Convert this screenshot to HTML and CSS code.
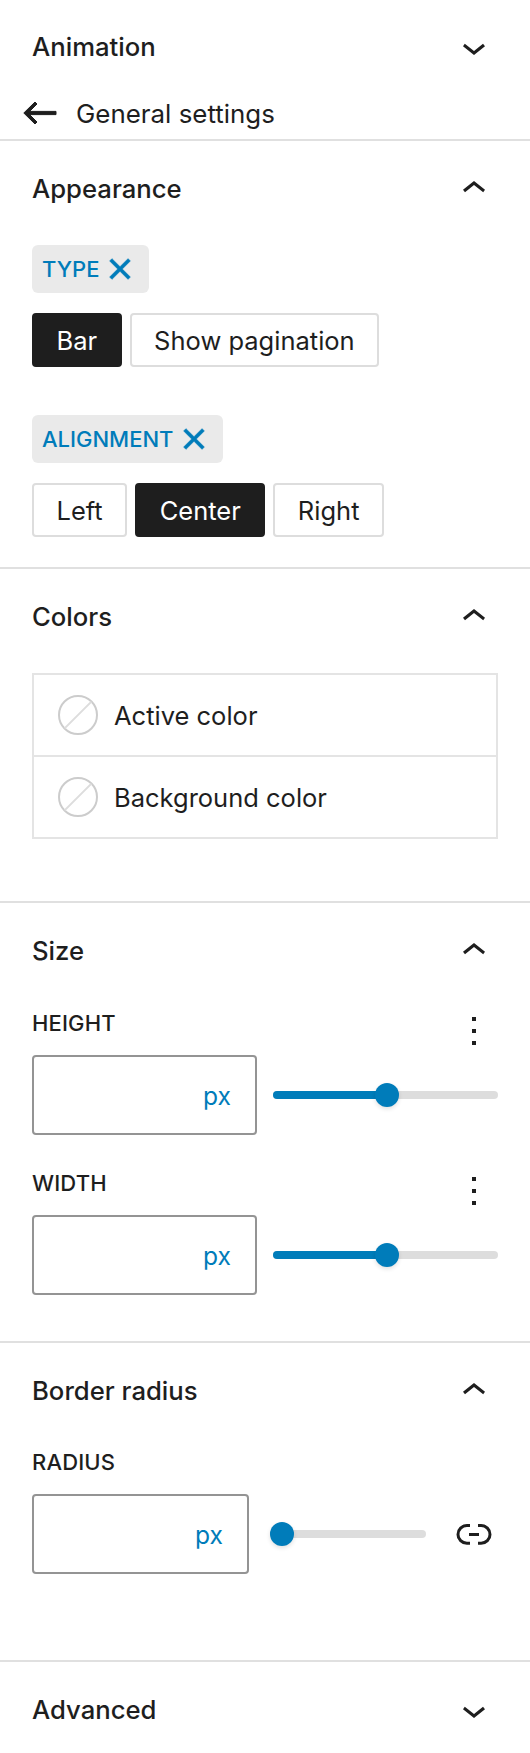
FILE: index.html
```html
<!DOCTYPE html>
<html lang="en">
<head>
<meta charset="utf-8">
<title>Settings</title>
<link rel="stylesheet" href="styles.css">
</head>
<body>
<aside class="sidebar">
  <section class="panel panel--first">
    <header class="head"><h2>Animation</h2>
      <svg class="icon" viewBox="0 0 24 24"><path d="M17.5 11.6L12 16l-5.5-4.4.9-1.2L12 14l4.5-3.6 1 1.2z"/></svg>
    </header>
    <div class="back">
      <svg class="icon icon--back" viewBox="0 0 24 24"><path d="M20 11.2H6.8l3.7-3.7-1-1L3.9 12l5.6 5.5 1-1-3.7-3.7H20z"/></svg>
      <span>General settings</span>
    </div>
  </section>

  <section class="panel panel--appearance">
    <header class="head"><h2>Appearance</h2>
      <svg class="icon" viewBox="0 0 24 24"><path d="M6.5 12.4L12 8l5.5 4.4-.9 1.2L12 10l-4.5 3.6-1-1.2z"/></svg>
    </header>
    <div class="chip"><span>TYPE</span>
      <svg class="chip-x" viewBox="6 6 12 12"><path d="M12 13.06l3.712 3.713 1.061-1.06L13.061 12l3.712-3.712-1.06-1.06L12 10.938 8.288 7.227l-1.061 1.06L10.939 12l-3.712 3.712 1.06 1.061L12 13.061z"/></svg>
    </div>
    <div class="btns">
      <button class="btn btn--on">Bar</button>
      <button class="btn">Show pagination</button>
    </div>
    <div class="chip chip--second"><span>ALIGNMENT</span>
      <svg class="chip-x" viewBox="6 6 12 12"><path d="M12 13.06l3.712 3.713 1.061-1.06L13.061 12l3.712-3.712-1.06-1.06L12 10.938 8.288 7.227l-1.061 1.06L10.939 12l-3.712 3.712 1.06 1.061L12 13.061z"/></svg>
    </div>
    <div class="btns">
      <button class="btn">Left</button>
      <button class="btn btn--on">Center</button>
      <button class="btn">Right</button>
    </div>
  </section>

  <section class="panel panel--colors">
    <header class="head"><h2>Colors</h2>
      <svg class="icon" viewBox="0 0 24 24"><path d="M6.5 12.4L12 8l5.5 4.4-.9 1.2L12 10l-4.5 3.6-1-1.2z"/></svg>
    </header>
    <div class="colors">
      <div class="color">
        <svg class="swatch" viewBox="0 0 40 40"><circle cx="20" cy="20" r="19" class="swatch-ring"/><line x1="6.6" y1="33.4" x2="33.4" y2="6.6" class="swatch-line"/></svg>
        <span>Active color</span>
      </div>
      <div class="color">
        <svg class="swatch" viewBox="0 0 40 40"><circle cx="20" cy="20" r="19" class="swatch-ring"/><line x1="6.6" y1="33.4" x2="33.4" y2="6.6" class="swatch-line"/></svg>
        <span>Background color</span>
      </div>
    </div>
  </section>

  <section class="panel panel--size">
    <header class="head"><h2>Size</h2>
      <svg class="icon" viewBox="0 0 24 24"><path d="M6.5 12.4L12 8l5.5 4.4-.9 1.2L12 10l-4.5 3.6-1-1.2z"/></svg>
    </header>
    <div class="label-row"><span class="label">HEIGHT</span>
      <svg class="icon icon--more" viewBox="0 0 24 24"><path d="M13 19h-2v-2h2v2zm0-6h-2v-2h2v2zm0-6h-2V5h2v2z"/></svg>
    </div>
    <div class="control">
      <div class="unit"><span>px</span></div>
      <div class="slider"><div class="fill"><div class="thumb"></div></div></div>
    </div>
    <div class="label-row label-row--next"><span class="label">WIDTH</span>
      <svg class="icon icon--more" viewBox="0 0 24 24"><path d="M13 19h-2v-2h2v2zm0-6h-2v-2h2v2zm0-6h-2V5h2v2z"/></svg>
    </div>
    <div class="control">
      <div class="unit"><span>px</span></div>
      <div class="slider"><div class="fill"><div class="thumb"></div></div></div>
    </div>
  </section>

  <section class="panel panel--radius">
    <header class="head"><h2>Border radius</h2>
      <svg class="icon" viewBox="0 0 24 24"><path d="M6.5 12.4L12 8l5.5 4.4-.9 1.2L12 10l-4.5 3.6-1-1.2z"/></svg>
    </header>
    <div class="label-row label-row--plain"><span class="label">RADIUS</span></div>
    <div class="control control--radius">
      <div class="unit"><span>px</span></div>
      <div class="slider slider--grow"><div class="thumb thumb--start"></div></div>
      <svg class="icon" viewBox="0 0 24 24"><path d="M10 17.389H8.444A5.194 5.194 0 1 1 8.444 7H10v1.5H8.444a3.694 3.694 0 0 0 0 7.389H10v1.5ZM14 7h1.556a5.194 5.194 0 0 1 0 10.39H14v-1.5h1.556a3.694 3.694 0 0 0 0-7.39H14V7Zm-4.5 6h5v-1.5h-5V13Z"/></svg>
    </div>
  </section>

  <section class="panel panel--last">
    <header class="head"><h2>Advanced</h2>
      <svg class="icon" viewBox="0 0 24 24"><path d="M17.5 11.6L12 16l-5.5-4.4.9-1.2L12 14l4.5-3.6 1 1.2z"/></svg>
    </header>
  </section>
</aside>
</body>
</html>
```

FILE: styles.css
```css
* { box-sizing: border-box; }
html, body { margin: 0; padding: 0; background: #fff; }
body {
  font-family: Inter, "Liberation Sans", sans-serif;
  font-size: 25.5px;
  color: #1e1e1e;
  -webkit-font-smoothing: antialiased;
}
.sidebar { width: 530px; height: 1753px; overflow: hidden; }
.panel { padding: 0 32px; border-bottom: 2px solid #e0e0e0; }
.panel--appearance { padding-bottom: 30px; }
.panel--colors { padding-bottom: 62px; }
.panel--size { padding-bottom: 46px; }
.panel--radius { padding-bottom: 86px; }
.panel--last { border-bottom: 0; }

.head { display: flex; align-items: center; justify-content: space-between; height: 96px; }
.panel--first .head { height: 94px; }
.head h2 { margin: 0; font-size: 25.7px; font-weight: 500; line-height: 32px; }
.icon { width: 48px; height: 48px; flex: none; fill: #1e1e1e; }
.icon--back { stroke: #1e1e1e; stroke-width: .5; }

.back { display: flex; align-items: center; height: 45px; margin-left: -16px; padding-bottom: 7px; font-size: 25.9px; }
.back .icon { margin-right: 12px; }

.chip {
  display: inline-flex;
  align-items: center;
  height: 48px;
  margin-top: 8px;
  padding: 0 16px 0 10px;
  border-radius: 6px;
  background: #eaeaea;
  color: #007cba;
  font-size: 22px;
  font-weight: 500;
  vertical-align: top;
}
.chip--second { margin-top: 48px; }
.chip-x { width: 26px; height: 26px; margin-left: 8px; fill: #007cba; stroke: #007cba; stroke-width: .3; }

.btns { display: flex; gap: 8px; margin-top: 20px; }
.btn {
  height: 54px;
  padding: 0 22.5px;
  border: 2px solid #ddd;
  border-radius: 4px;
  background: #fff;
  color: #1e1e1e;
  font: 400 25.5px Inter, "Liberation Sans", sans-serif;
}
.btn--on { border-color: #1e1e1e; background: #1e1e1e; color: #fff; }

.colors { margin-top: 8px; border: 2px solid #e4e4e4; }
.color { display: flex; align-items: center; gap: 16px; height: 80px; padding-left: 24px; }
.color + .color { border-top: 2px solid #e4e4e4; height: 82px; }
.swatch { width: 40px; height: 40px; flex: none; }
.swatch-ring { fill: none; stroke: #ccc; stroke-width: 2; }
.swatch-line { stroke: #ddd; stroke-width: 2; }

.label-row { display: flex; align-items: flex-start; justify-content: space-between; height: 48px; }
.label-row--next { margin-top: 24px; }
.label-row--plain { height: 46px; margin-bottom: 9px; }
.label { font-size: 22px; font-weight: 500; line-height: 48px; letter-spacing: .15px; }
.label-row--plain .label { line-height: 46px; }
.icon--more { margin-top: 8px; }

.control { display: flex; align-items: center; gap: 16px; margin-top: 8px; }
.control--radius { margin-top: 0; gap: 0; }
.unit {
  display: flex;
  align-items: center;
  justify-content: flex-end;
  width: 225px;
  height: 80px;
  padding: 2px 24px 0 0;
  border: 2px solid #949494;
  border-radius: 4px;
  color: #007cba;
  font-size: 24.6px;
}
.control--radius .unit { width: 217px; margin-right: 21px; }
.slider { flex: none; width: 225px; height: 8px; border-radius: 4px; background: #ddd; position: relative; }
.slider--grow { width: 156px; margin-right: 24px; }
.fill { position: relative; width: 114px; height: 8px; border-radius: 4px; background: #007cba; }
.thumb {
  position: absolute;
  top: -8px;
  right: -12px;
  width: 24px;
  height: 24px;
  border-radius: 50%;
  background: #007cba;
  box-shadow: 0 2px 4px rgba(0, 0, 0, .12);
}
.thumb--start { left: 0; right: auto; }
```
